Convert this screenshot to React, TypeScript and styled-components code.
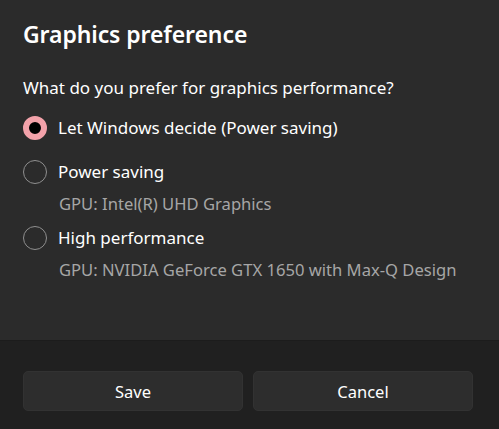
import styled, { createGlobalStyle } from "styled-components";

const GlobalStyle = createGlobalStyle`
   html, body {
      margin: 0;
      padding: 0;
      background: #2b2b2b;
   }
   body {
      font-family: "Noto Sans", "Open Sans", sans-serif;
      color: #ffffff;
   }
`;

const Dialog = styled.div`
   width: 499px;
   height: 429px;
   display: flex;
   flex-direction: column;
   background: #2b2b2b;
`;

const Body = styled.div`
   flex: 1;
   padding: 18px 23px 0 23px;
   display: flex;
   flex-direction: column;
`;

const Title = styled.h1`
   margin: 0;
   font-size: 23px;
   font-weight: 600;
   line-height: 32px;
   letter-spacing: -0.1px;
`;

const Question = styled.p`
   margin: 26px 0 0 0;
   font-size: 17px;
   line-height: 24px;
`;

const Options = styled.div`
   display: flex;
   flex-direction: column;
   margin-top: 6px;
`;

const Option = styled.label`
   display: flex;
   align-items: center;
   gap: 11px;
   height: 44px;
   font-size: 17px;
   line-height: 24px;
`;

const Radio = styled.span<{ $checked?: boolean }>`
   box-sizing: border-box;
   width: 24px;
   height: 24px;
   border-radius: 50%;
   flex-shrink: 0;
   border: ${(p) => (p.$checked ? "6px solid #f3a2aa" : "1.5px solid #8f8f8f")};
   background: ${(p) => (p.$checked ? "#000000" : "transparent")};
`;

const Detail = styled.div`
   padding-left: 36px;
   margin-top: -2px;
   line-height: 24px;
   font-size: 16.6px;
   color: #a6a6a6;
`;

const Footer = styled.div`
   height: 89px;
   border-top: 1px solid #1c1c1c;
   background: #202020;
   display: grid;
   grid-template-columns: 1fr 1fr;
   gap: 10px;
   padding: 30px 26px 0 23px;
   box-sizing: border-box;
   align-items: start;
`;

const Button = styled.button`
   height: 40px;
   border-radius: 5px;
   border: 1px solid #323232;
   background: #2d2d2d;
   color: #ffffff;
   font-family: "Noto Sans", "Open Sans", sans-serif;
   font-size: 16.5px;
`;

const options = [
   { label: "Let Windows decide (Power saving)", checked: true },
   { label: "Power saving", detail: "GPU: Intel(R) UHD Graphics" },
   { label: "High performance", detail: "GPU: NVIDIA GeForce GTX 1650 with Max-Q Design" },
];

export default function App() {
   return (
      <>
         <GlobalStyle />
         <Dialog>
            <Body>
               <Title>Graphics preference</Title>
               <Question>What do you prefer for graphics performance?</Question>
               <Options>
                  {options.map((o) => (
                     <div key={o.label}>
                        <Option>
                           <Radio $checked={o.checked} />
                           {o.label}
                        </Option>
                        {o.detail && <Detail>{o.detail}</Detail>}
                     </div>
                  ))}
               </Options>
            </Body>
            <Footer>
               <Button>Save</Button>
               <Button>Cancel</Button>
            </Footer>
         </Dialog>
      </>
   );
}
